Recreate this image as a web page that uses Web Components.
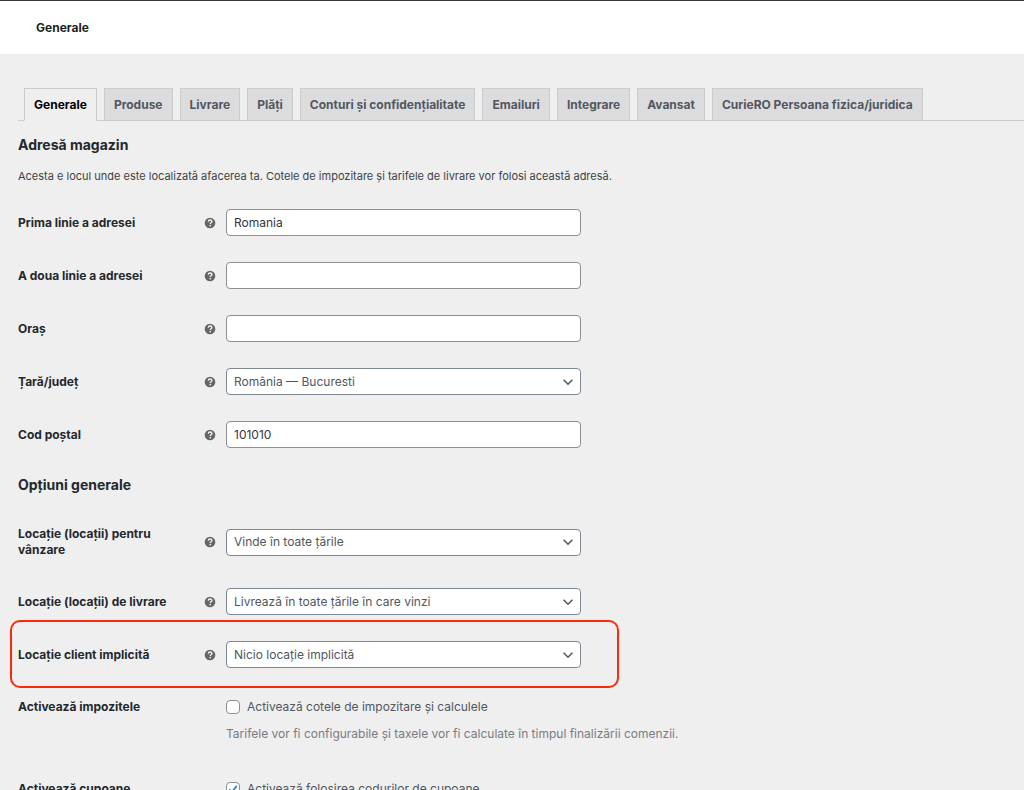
<!DOCTYPE html>
<html lang="ro">
<head>
<meta charset="utf-8">
<meta name="viewport" content="width=device-width, initial-scale=1">
<title>Generale</title>
<style>
  body { margin: 0; background: #efefef; color: #23282d; font: 12px/16px Inter, "Open Sans", sans-serif; }
</style>
</head>
<body>
<settings-page heading="Generale">
  <tab-bar slot="tabs">
    <tab-item current>Generale</tab-item>
    <tab-item>Produse</tab-item>
    <tab-item>Livrare</tab-item>
    <tab-item>Plăți</tab-item>
    <tab-item>Conturi și confidențialitate</tab-item>
    <tab-item>Emailuri</tab-item>
    <tab-item>Integrare</tab-item>
    <tab-item>Avansat</tab-item>
    <tab-item>CurieRO Persoana fizica/juridica</tab-item>
  </tab-bar>
  <settings-section heading="Adresă magazin">
    <span slot="intro">Acesta e locul unde este localizată afacerea ta. Cotele de impozitare și tarifele de livrare vor folosi această adresă.</span>
    <settings-field label="Prima linie a adresei" value="Romania"></settings-field>
    <settings-field label="A doua linie a adresei"></settings-field>
    <settings-field label="Oraș"></settings-field>
    <settings-field label="Țară/județ" type="select" value="România — Bucuresti"></settings-field>
    <settings-field label="Cod poștal" value="101010"></settings-field>
  </settings-section>
  <settings-section heading="Opțiuni generale">
    <settings-field class="tall" label="Locație (locații) pentru vânzare" type="select" value="Vinde în toate țările"></settings-field>
    <settings-field label="Locație (locații) de livrare" type="select" value="Livrează în toate țările în care vinzi"></settings-field>
    <settings-field highlighted label="Locație client implicită" type="select" value="Nicio locație implicită"></settings-field>
    <settings-toggle label="Activează impozitele" text="Activează cotele de impozitare și calculele">Tarifele vor fi configurabile și taxele vor fi calculate în timpul finalizării comenzii.</settings-toggle>
    <settings-toggle checked label="Activează cupoane" text="Activează folosirea codurilor de cupoane"></settings-toggle>
  </settings-section>
</settings-page>

<script>
const define = (name, render) => customElements.define(name, class extends HTMLElement {
  connectedCallback() {
    if (this.shadowRoot) return;
    this.attachShadow({ mode: "open" }).innerHTML = render(this);
  }
});
const attr = (el, name) => el.getAttribute(name) || "";

define("settings-page", el => `
  <style>
    :host { display: block; }
    header { display: flex; align-items: center; box-sizing: border-box; height: 54px; padding-left: 36px; background: #fff; border-top: 1px solid #32373c; }
    h1 { margin: 0; font-size: 12px; line-height: 16px; font-weight: 700; color: #1e1e1e; }
    main { padding: 34px 0 0 18px; }
  </style>
  <header><h1>${attr(el, "heading")}</h1></header>
  <main><slot name="tabs"></slot><slot></slot></main>`);

define("tab-bar", () => `
  <style>
    :host { display: block; }
    nav { display: flex; gap: 7px; padding-left: 6px; border-bottom: 1px solid #ccc; }
  </style>
  <nav><slot></slot></nav>`);

define("tab-item", el => `
  <style>
    :host { display: block; margin-bottom: -1px; white-space: nowrap; }
    a { display: block; padding: 8px 9px 7px; border: 1px solid #ccc; background: #dcdcde; color: #50575e; font-size: 12px; line-height: 16px; font-weight: 700; text-decoration: none; }
    :host([current]) a { background: #efefef; border-bottom-color: #efefef; color: #000; }
  </style>
  <a href="#"${el.hasAttribute("current") ? ' aria-current="page"' : ""}><slot></slot></a>`);

define("settings-section", el => `
  <style>
    :host { display: block; }
    h2 { margin: 14px 0 0; font-size: 14px; line-height: 20px; font-weight: 700; }
    p { margin: 13px 0 12px; font-size: 11px; line-height: 16px; color: #3c434a; }
  </style>
  <h2>${attr(el, "heading")}</h2>
  <p><slot name="intro"></slot></p>
  <slot></slot>`);

const rowStyle = `
    :host { display: grid; grid-template-columns: 186px 22px minmax(0, 1fr); align-items: center; position: relative; padding: 13px 0; }
    .name { font-size: 12px; line-height: 16px; font-weight: 700; max-width: 160px; }`;

define("settings-field", el => `
  <style>${rowStyle}
    :host(.tall) { padding: 18px 0 17px; }
    :host([highlighted])::after { content: ""; position: absolute; top: -8px; bottom: -7px; left: -8px; width: 609px; box-sizing: border-box; border: 2px solid #fc2a0c; border-radius: 10px; pointer-events: none; }
    svg { display: block; width: 12px; height: 12px; }
    .control { display: grid; align-items: center; max-width: 355px; }
    .control > * { grid-area: 1 / 1; }
    input, select { box-sizing: border-box; width: 100%; height: 27px; margin: 0; padding: 0 7px; border: 1px solid #8c8f94; border-radius: 4px; background: #fff; color: #32373c; font: inherit; font-size: 12px; line-height: 18px; appearance: none; }
    select { border-color: #7e8993; color: #50575e; padding-right: 24px; }
    .arrow { justify-self: end; margin-right: 7px; pointer-events: none; }
  </style>
  <label class="name" for="control">${attr(el, "label")}</label>
  <svg viewBox="0 0 12 12" aria-hidden="true"><circle cx="6" cy="6" r="5.3" fill="#666"/><path d="M4.3 4.7C4.3 3.6 5 3 6.1 3s1.8.6 1.8 1.5c0 1.3-1.6 1.2-1.6 2.4" fill="none" stroke="#f0f0f0" stroke-width="1.4"/><circle cx="6.2" cy="8.6" r=".85" fill="#f0f0f0"/></svg>
  <span class="control">${attr(el, "type") === "select"
    ? `<select id="control"><option>${attr(el, "value")}</option></select>
       <svg class="arrow" viewBox="0 0 12 12" aria-hidden="true"><path d="M1.6 3.8 6 8.2l4.4-4.4" fill="none" stroke="#50575e" stroke-width="1.6"/></svg>`
    : `<input id="control" type="text" value="${attr(el, "value")}">`}</span>`);

define("settings-toggle", el => `
  <style>${rowStyle}
    :host { align-items: start; padding: 18px 0 20px; }
    .body { grid-column: 3; }
    .choice { display: flex; align-items: center; gap: 7px; color: #50575e; line-height: 16px; }
    .box { display: grid; }
    .box > * { grid-area: 1 / 1; }
    input { appearance: none; box-sizing: border-box; width: 14px; height: 14px; margin: 0; border: 1px solid #8c8f94; border-radius: 4px; background: #fff; }
    svg { width: 14px; height: 14px; pointer-events: none; }
    p { margin: 10px 0 0; font-size: 12px; line-height: 18px; color: #787c82; }
  </style>
  <label class="name" for="control">${attr(el, "label")}</label>
  <div class="body">
    <label class="choice"><span class="box"><input id="control" type="checkbox"${el.hasAttribute("checked") ? " checked" : ""}>${el.hasAttribute("checked")
      ? `<svg viewBox="0 0 14 14" aria-hidden="true"><path d="m3.3 7.4 2.5 2.7 5-6.2" fill="none" stroke="#3582c4" stroke-width="1.8"/></svg>` : ""}</span>${attr(el, "text")}</label>
    <p><slot></slot></p>
  </div>`);
</script>
</body>
</html>
